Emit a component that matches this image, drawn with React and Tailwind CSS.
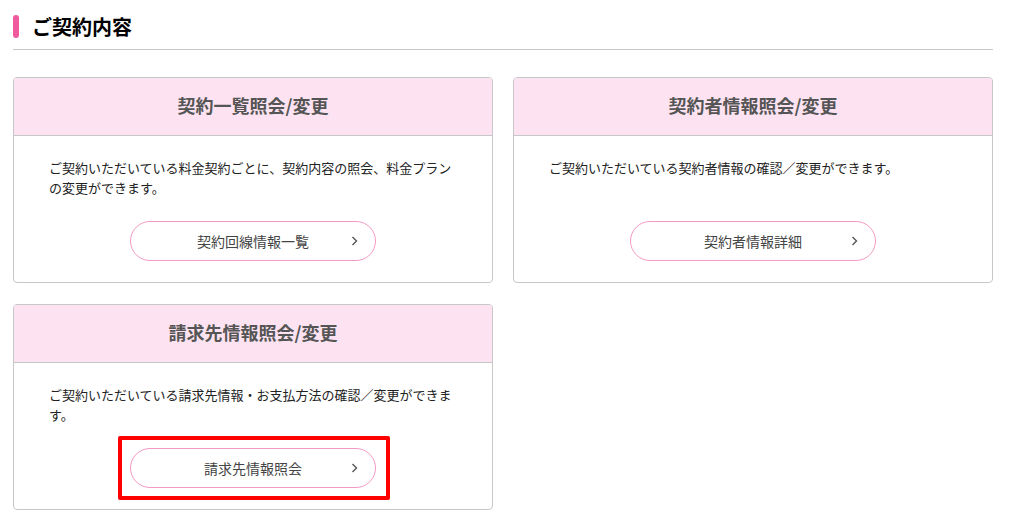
import React from 'react'

const cards = [
  {
    title: '契約一覧照会/変更',
    text: 'ご契約いただいている料金契約ごとに、契約内容の照会、料金プランの変更ができます。',
    button: '契約回線情報一覧',
  },
  {
    title: '契約者情報照会/変更',
    text: 'ご契約いただいている契約者情報の確認／変更ができます。',
    button: '契約者情報詳細',
  },
  {
    title: '請求先情報照会/変更',
    text: 'ご契約いただいている請求先情報・お支払方法の確認／変更ができます。',
    button: '請求先情報照会',
    highlight: true,
  },
]

function Chevron() {
  return (
    <svg width="7" height="11" viewBox="0 0 7 11" className="absolute right-[17px] top-1/2 -translate-y-1/2">
      <polyline points="1.5,1.5 5.5,5.5 1.5,9.5" fill="none" stroke="#555" strokeWidth="1.4" />
    </svg>
  )
}

function Card({ card }) {
  return (
    <div className="flex flex-col rounded-[4px] border border-[#c8c8c8] overflow-hidden bg-white">
      <div className="h-[58px] pb-[2px] flex items-center justify-center bg-[#fde3f1] border-b border-[#c8c8c8] text-[18px] font-bold text-[#555]">
        {card.title}
      </div>
      <div className="flex-1 flex flex-col px-[35px] pt-[22px] pb-[21px]">
        <p className="text-[13px] leading-5 text-[#222]">{card.text}</p>
        <div className="mt-auto pt-[23px] self-center">
          <div className="relative">
            <button
              type="button"
              className="relative w-[246px] h-[40px] rounded-full border border-[#f29ac2] bg-white text-[14px] text-[#444] flex items-center justify-center"
            >
              <span>{card.button}</span>
              <Chevron />
            </button>
            {card.highlight && (
              <span className="absolute left-[-12px] right-[-14px] top-[-12px] bottom-[-12px] border-4 border-[#ff0000] rounded-[2px]" />
            )}
          </div>
        </div>
      </div>
    </div>
  )
}

export default function App() {
  return (
    <div className="w-[1010px] h-[526px] bg-white font-['Noto_Sans_CJK_JP',sans-serif]">
      <div className="ml-[13px] w-[980px]">
        <div className="pt-[15px] flex items-center gap-[13px] pb-[11px] border-b border-[#c8c8c8]">
          <span className="w-[6px] h-[23px] rounded-[3px] bg-[#f05a9e]" />
          <h1 className="text-[20px] leading-[23px] font-bold text-black">ご契約内容</h1>
        </div>
        <div className="mt-[27px] grid grid-cols-2 gap-x-5 gap-y-[21px]">
          {cards.map((c) => (
            <Card key={c.title} card={c} />
          ))}
        </div>
      </div>
    </div>
  )
}
